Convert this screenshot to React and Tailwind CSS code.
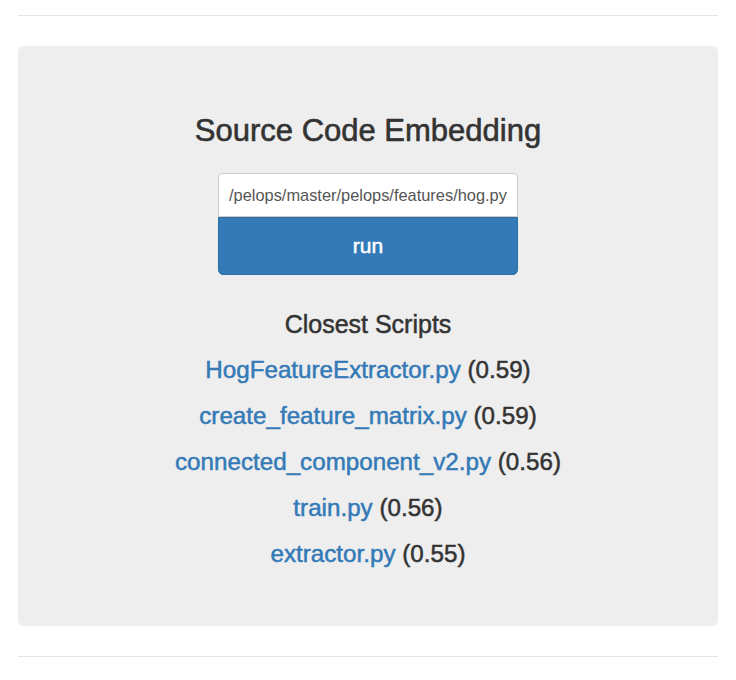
import { useState } from 'react'

const RESULTS = [
    { name: 'HogFeatureExtractor.py', score: '0.59' },
    { name: 'create_feature_matrix.py', score: '0.59' },
    { name: 'connected_component_v2.py', score: '0.56' },
    { name: 'train.py', score: '0.56' },
    { name: 'extractor.py', score: '0.55' },
]

export default function App() {
    const [url, setUrl] = useState('/pelops/master/pelops/features/hog.py')

    return (
        <div className="px-[18px] pt-[15px] font-['Liberation_Sans',Arial,sans-serif] text-[#333]">
            <div className="border-t border-[#e5e5e5]" />

            {/* Jumbotron */}
            <div className="mt-[30px] h-[580px] rounded-[6px] bg-[#eeeeee] pt-[67px] flex flex-col items-center">
                <h2 className="text-[31px] leading-[36px] font-medium text-[#333] [-webkit-text-stroke:0.6px_currentColor]">
                    Source Code Embedding
                </h2>

                <div className="mt-[24px] w-[300px] flex flex-col">
                    <input
                        type="text"
                        value={url}
                        onChange={(e) => setUrl(e.target.value)}
                        className="h-[44px] w-full rounded-t-[4px] border border-[#ccc] bg-white px-[10px] text-[16.4px] text-[#555] outline-none"
                    />
                    <button className="h-[58px] w-full rounded-b-[5px] border border-[#2e6da4] bg-[#337ab7] text-[21px] text-white [-webkit-text-stroke:0.5px_currentColor]">
                        run
                    </button>
                </div>

                <h3 className="mt-[26px] text-[25px] leading-[46px] font-medium [-webkit-text-stroke:0.5px_currentColor]">
                    Closest Scripts
                </h3>
                <div className="flex flex-col items-center [-webkit-text-stroke:0.5px_currentColor]">
                    {RESULTS.map((r) => (
                        <div key={r.name} className="text-[24.2px] leading-[46px] font-medium">
                            <a href="#" className="text-[#337ab7]">{r.name}</a>{' '}
                            <span>({r.score})</span>
                        </div>
                    ))}
                </div>
            </div>

            <div className="mt-[30px] border-t border-[#e5e5e5]" />
        </div>
    )
}
